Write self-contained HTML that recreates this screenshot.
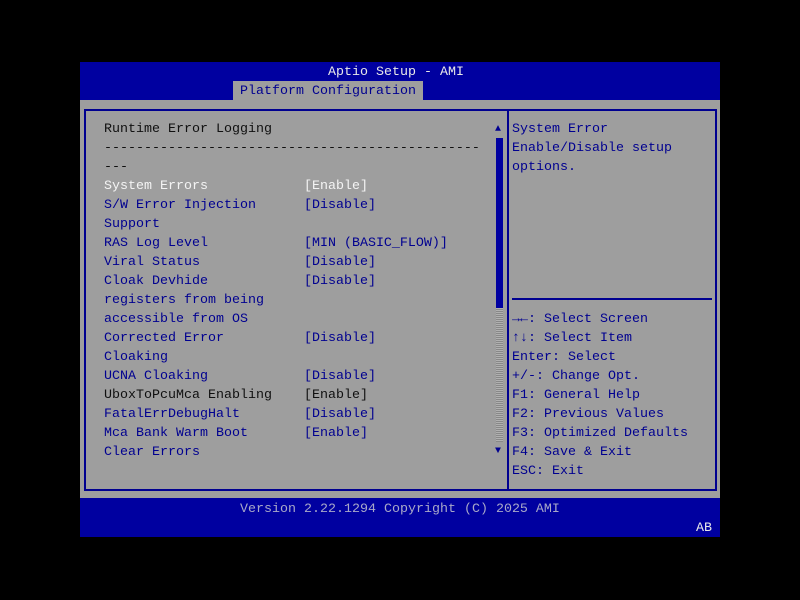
<!DOCTYPE html>
<html><head><style>
body{margin:0;width:800px;height:600px;background:#000;position:relative;overflow:hidden;font-family:"Liberation Mono",monospace;font-size:13.33px;}
.a{position:absolute;}
.t{position:absolute;white-space:pre;line-height:19px;}
.b{color:#000090}.w{color:#f4f4f4}.k{color:#101010}
</style></head><body>
<div class="a" style="left:80px;top:62px;width:640px;height:38px;background:#0000a0"></div>
<div class="a" style="left:80px;top:100px;width:640px;height:398px;background:#9e9e9e"></div>
<div class="a" style="left:80px;top:498px;width:640px;height:39px;background:#0000a0"></div>
<div class="t" style="left:328px;top:63px;color:#e8e8e8">Aptio Setup - AMI</div>
<div class="a" style="left:233px;top:81px;width:190px;height:19px;background:#9e9e9e"></div>
<div class="t b" style="left:240px;top:82px">Platform Configuration</div>
<div class="a" style="left:84px;top:109px;width:629px;height:378px;border:2px solid #000090"></div>
<div class="a" style="left:507px;top:109px;width:2px;height:380px;background:#000090"></div>
<div class="a" style="left:512px;top:298px;width:200px;height:2px;background:#000090"></div>
<div class="a" style="left:495px;top:124px;color:#000090;font-size:10px">▲</div>
<div class="a" style="left:496px;top:138px;width:7px;height:170px;background:#0000a0"></div>
<div class="a" style="left:496px;top:308px;width:7px;height:134px;background:repeating-linear-gradient(0deg,#888 0 1px,#b0b0b0 1px 2px)"></div>
<div class="a" style="left:495px;top:446px;color:#000090;font-size:10px">▼</div>
<div class="t" style="left:104px;top:120px"><span class="k">Runtime Error Logging</span>
<span class="k">-----------------------------------------------</span>
<span class="k">---</span>
<span class="w">System Errors            [Enable]</span>
<span class="b">S/W Error Injection      [Disable]</span>
<span class="b">Support</span>
<span class="b">RAS Log Level            [MIN (BASIC_FLOW)]</span>
<span class="b">Viral Status             [Disable]</span>
<span class="b">Cloak Devhide            [Disable]</span>
<span class="b">registers from being</span>
<span class="b">accessible from OS</span>
<span class="b">Corrected Error          [Disable]</span>
<span class="b">Cloaking</span>
<span class="b">UCNA Cloaking            [Disable]</span>
<span class="k">UboxToPcuMca Enabling    [Enable]</span>
<span class="b">FatalErrDebugHalt        [Disable]</span>
<span class="b">Mca Bank Warm Boot       [Enable]</span>
<span class="b">Clear Errors</span></div>
<div class="t b" style="left:512px;top:120px">System Error
Enable/Disable setup
options.</div>
<div class="t b" style="left:512px;top:310px">→←: Select Screen
↑↓: Select Item
Enter: Select
+/-: Change Opt.
F1: General Help
F2: Previous Values
F3: Optimized Defaults
F4: Save &amp; Exit
ESC: Exit</div>
<div class="t" style="left:240px;top:500px;color:#a8a8c8">Version 2.22.1294 Copyright (C) 2025 AMI</div>
<div class="t" style="left:696px;top:519px;color:#e8e8e8">AB</div>
</body></html>
